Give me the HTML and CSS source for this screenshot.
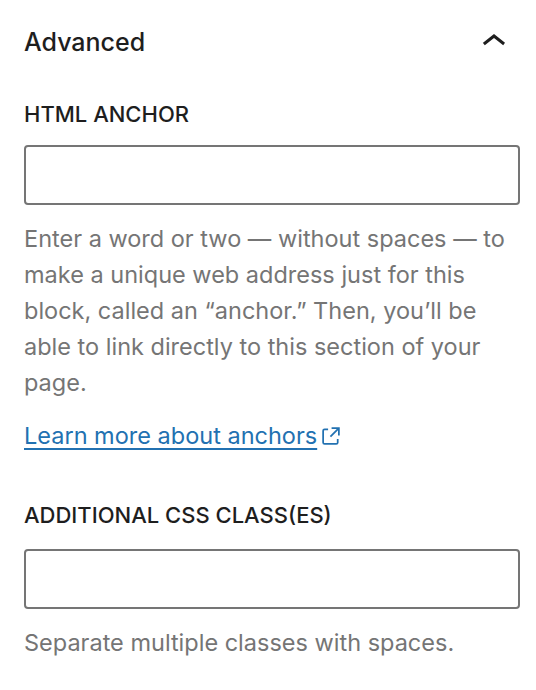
FILE: index.html
```html
<!DOCTYPE html>
<html lang="en">
<head>
<meta charset="utf-8">
<title>Advanced</title>
<link rel="stylesheet" href="styles.css">
</head>
<body>
<div class="panel">
  <div class="panel-header">
    <h2 class="panel-title">Advanced</h2>
    <svg class="chevron" viewBox="0 0 24 24" width="48" height="48" aria-hidden="true"><path d="M6.5 12.4L12 8l5.5 4.4-.9 1.2L12 10l-4.6 3.6-1-1.2z"/></svg>
  </div>
  <div class="field">
    <label class="field-label" for="anchor">HTML anchor</label>
    <input class="field-input" id="anchor" type="text">
    <p class="field-help">Enter a word or two — without spaces — to make a unique web address just for this block, called an “anchor.” Then, you’ll be able to link directly to this section of your page.</p>
    <p class="field-link-row"><a class="ext-link" href="#">Learn more about anchors</a><svg class="ext-icon" viewBox="0 0 24 24" width="28" height="28" aria-hidden="true"><path d="M19.5 4.5h-7V6h4.44l-5.97 5.97 1.06 1.06L18 7.06v4.44h1.5v-7Zm-13 1a2 2 0 0 0-2 2v10a2 2 0 0 0 2 2h10a2 2 0 0 0 2-2v-3H17v3a.5.5 0 0 1-.5.5h-10a.5.5 0 0 1-.5-.5v-10a.5.5 0 0 1 .5-.5h3V5.5h-3Z"/></svg></p>
  </div>
  <div class="field field-second">
    <label class="field-label field-label-second" for="classes">Additional CSS class(es)</label>
    <input class="field-input" id="classes" type="text">
    <p class="field-help">Separate multiple classes with spaces.</p>
  </div>
</div>
</body>
</html>
```
FILE: styles.css
```css
html, body {
  margin: 0;
  padding: 0;
  background: #ffffff;
}
body {
  font-family: Inter, "Noto Sans", "Liberation Sans", sans-serif;
  color: #1e1e1e;
}
.panel {
  padding: 0 16px 0 24px;
}
.panel-header {
  display: flex;
  align-items: center;
  justify-content: space-between;
  height: 48px;
  padding-top: 18px;
}
.panel-title {
  margin: 0;
  font-size: 25px;
  font-weight: 500;
  line-height: 48px;
  color: #1e1e1e;
}
.chevron {
  fill: #1e1e1e;
  margin-right: 2px;
}
.field {
  display: flex;
  flex-direction: column;
  margin-top: 32px;
}
.field-label {
  font-size: 22px;
  font-weight: 500;
  text-transform: uppercase;
  line-height: 32px;
  margin-bottom: 15px;
}
.field-label-second {
  margin-bottom: 18px;
}
.field-input {
  box-sizing: border-box;
  height: 60px;
  margin: 0;
  border: 2px solid #757575;
  border-radius: 4px;
  background: #fff;
}
.field-help {
  margin: 16px 0 0;
  font-size: 23.5px;
  line-height: 36px;
  color: #757575;
}
.field-link-row {
  margin: 17px 0 0;
  font-size: 23.5px;
  line-height: 36px;
  display: flex;
  align-items: center;
}
.ext-link {
  color: #2271b1;
  text-decoration: underline;
  text-decoration-thickness: 2px;
  text-underline-offset: 4px;
}
.ext-icon {
  fill: #2271b1;
  margin-left: 0;
}
.field-second {
  margin-top: 45px;
}
```
